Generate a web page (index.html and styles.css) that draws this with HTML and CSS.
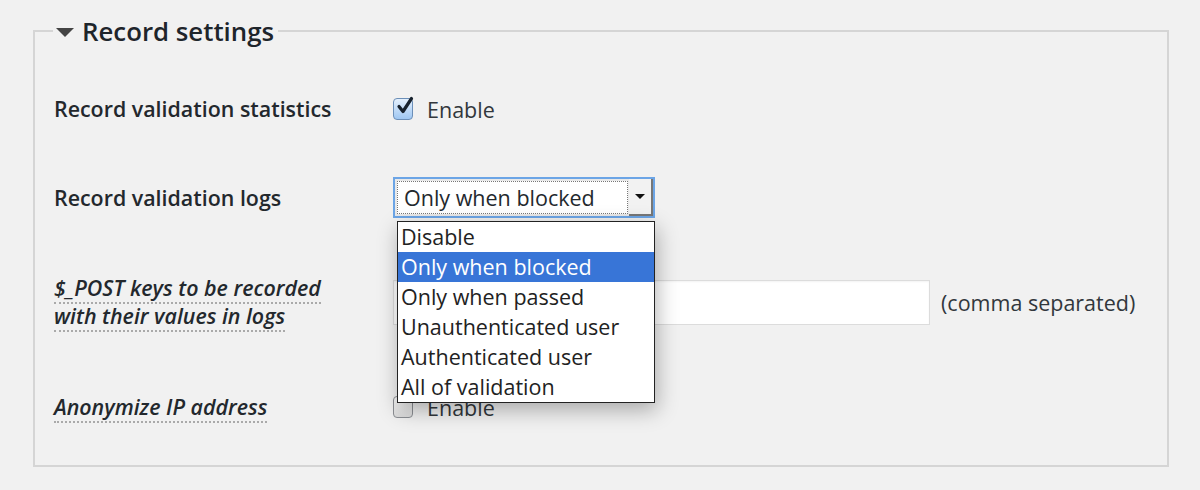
FILE: index.html
```html
<!DOCTYPE html>
<html>
<head>
<meta charset="utf-8">
<link rel="stylesheet" href="styles.css">
</head>
<body>
<fieldset class="box">
  <legend class="legend"><span class="caret"></span>Record settings</legend>
  <div class="rows">
    <div class="row row-stats">
      <div class="label">Record validation statistics</div>
      <div class="field">
        <span class="cb checked"><svg viewBox="0 0 20 20" width="20" height="20"><path d="M4 10.5 L8 15.5 L16.5 2.5" fill="none" stroke="#17222e" stroke-width="3.2" stroke-linecap="round" stroke-linejoin="round"/></svg></span>
        <span class="text">Enable</span>
      </div>
    </div>
    <div class="row row-logs">
      <div class="label">Record validation logs</div>
      <div class="field">
        <div class="select">
          <div class="select-value">Only when blocked</div>
          <div class="select-btn"><span class="arrow"></span></div>
          <ul class="menu">
            <li>Disable</li>
            <li class="active">Only when blocked</li>
            <li>Only when passed</li>
            <li>Unauthenticated user</li>
            <li>Authenticated user</li>
            <li>All of validation</li>
          </ul>
        </div>
      </div>
    </div>
    <div class="row row-post">
      <div class="label italic"><span class="dotted">$_POST keys to be recorded</span><br><span class="dotted">with their values in logs</span></div>
      <div class="field">
        <div class="input">log,user_pass,pass,pwd</div>
        <span class="text note">(comma separated)</span>
      </div>
    </div>
    <div class="row row-anon">
      <div class="label italic"><span class="dotted">Anonymize IP address</span></div>
      <div class="field">
        <span class="cb"></span>
        <span class="text">Enable</span>
      </div>
    </div>
  </div>
</fieldset>
</body>
</html>
```
FILE: styles.css
```css
html, body {
  margin: 0;
  padding: 0;
  background: #f1f1f1;
}
body {
  font-family: "Open Sans", "Liberation Sans", sans-serif;
  color: #23282d;
  width: 1200px;
  height: 490px;
  overflow: hidden;
}
.box {
  margin: 16px 31px 0 33px;
  padding: 0 0 20px 19px;
  border: 2px solid #d5d5d5;
  height: 451px;
  box-sizing: border-box;
}
.legend {
  margin-left: -1px;
  padding: 0 4px 0 3px;
  font-size: 25.8px;
  font-weight: 600;
  line-height: 30px;
  color: #1e252b;
}
.caret {
  display: inline-block;
  width: 0;
  height: 0;
  border-left: 9px solid transparent;
  border-right: 9px solid transparent;
  border-top: 9px solid #444;
  margin-right: 8px;
  vertical-align: 4px;
}
.rows {
  display: flex;
  flex-direction: column;
}
.row {
  display: grid;
  grid-template-columns: 339px 1fr;
  align-items: center;
}
.row-stats { margin-top: 48px; height: 30px; }
.row-logs { margin-top: 53px; height: 41px; }
.row-post { margin-top: 56px; height: 56px; }
.row-anon { margin-top: 62px; height: 30px; }
.label {
  font-size: 21.4px;
  font-weight: 600;
  line-height: 28px;
}
.italic { font-style: italic; }
.dotted {
  border-bottom: 2px dotted #aaa;
}
.field {
  display: flex;
  align-items: center;
  font-size: 21.5px;
}
.text { margin-left: 14px; color: #32373c; }
.cb {
  width: 20px;
  height: 22px;
  border: 1px solid #8c8f94;
  border-radius: 4px;
  background: linear-gradient(#fafafa, #dcdcdc);
  box-sizing: border-box;
  display: inline-flex;
  align-items: center;
  justify-content: center;
  position: relative;
}
.cb.checked {
  background: linear-gradient(#e4f0fd, #9fc7f2);
  border-color: #6c8fb8;
}
.cb svg {
  position: absolute;
  left: 1px;
  top: -3px;
}
.select {
  position: relative;
  width: 262px;
  height: 41px;
  border: 2px solid #6ca5e6;
  box-sizing: border-box;
  background: #e9e9e9;
  display: flex;
  padding: 2px;
}
.select-value {
  flex: 1;
  background: #fff;
  border: 1px dotted #777;
  font-size: 21.5px;
  line-height: 31px;
  padding-left: 6px;
  white-space: nowrap;
}
.select-btn {
  width: 22px;
  display: flex;
  align-items: center;
  justify-content: center;
  border-right: 2px solid #777;
  border-bottom: 2px solid #777;
  background: #f2f2f2;
  margin: -2px -2px -2px 1px;
}
.arrow {
  width: 0;
  height: 0;
  border-left: 5px solid transparent;
  border-right: 5px solid transparent;
  border-top: 5px solid #111;
}
.menu {
  position: absolute;
  left: 2px;
  top: 42px;
  width: 258px;
  margin: 0;
  padding: 0;
  list-style: none;
  background: #fff;
  border: 1px solid #222;
  box-sizing: border-box;
  box-shadow: 2px 7px 20px rgba(0,0,0,0.3);
  z-index: 5;
}
.menu li {
  font-size: 21.5px;
  line-height: 30px;
  height: 30px;
  padding-left: 3px;
  color: #222;
  white-space: nowrap;
}
.menu li.active {
  background: #3875d7;
  color: #fff;
}
.input {
  width: 537px;
  height: 45px;
  box-sizing: border-box;
  border: 1px solid #dcdcdc;
  background: #fff;
  font-size: 21.5px;
  line-height: 43px;
  padding-left: 10px;
  white-space: nowrap;
  overflow: hidden;
  box-shadow: inset 0 1px 2px rgba(0,0,0,0.05);
}
.note { margin-left: 11px; }
```
